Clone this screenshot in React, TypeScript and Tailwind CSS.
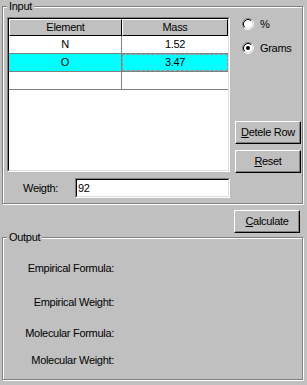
import React from "react"

const font = "font-['Liberation_Sans',Arial,sans-serif] text-[11px] tracking-[-0.3px] text-black"

function Radio({ checked, label }: { checked?: boolean; label: string }) {
  return (
    <div className="flex h-[14px] items-center ml-[7px]">
      <svg width="12" height="12" viewBox="0 0 12 12" className="shrink-0">
        <circle cx="6" cy="6" r="4.5" fill="white" />
        <path d="M2.11 9.89 A5.5 5.5 0 0 1 9.89 2.11" stroke="#808080" fill="none" />
        <path d="M9.89 2.11 A5.5 5.5 0 0 1 2.11 9.89" stroke="white" fill="none" />
        <path d="M2.82 9.18 A4.5 4.5 0 0 1 9.18 2.82" stroke="black" fill="none" />
        <path d="M9.18 2.82 A4.5 4.5 0 0 1 2.82 9.18" stroke="#dfdfdf" fill="none" />
        {checked && <circle cx="6" cy="6" r="2" fill="black" />}
      </svg>
      <span className="ml-[6px] leading-[13px]">{label}</span>
    </div>
  )
}

function Btn({ children, className = "" }: { children: React.ReactNode; className?: string }) {
  return (
    <button
      className={
        "w-[66px] h-[23px] bg-[#c0c0c0] border border-t-white border-l-white border-r-black border-b-black shadow-[inset_-1px_-1px_0_#808080] flex items-center justify-center leading-[13px] " +
        className
      }
    >
      {children}
    </button>
  )
}

function Group({ title, className = "", children }: { title: string; className?: string; children?: React.ReactNode }) {
  return (
    <div
      className={
        "relative ml-[2px] w-[301px] border border-[#808080] shadow-[inset_1px_1px_0_white,1px_1px_0_white] " + className
      }
    >
      {/* caption sits over the etched line */}
      <span className="absolute left-[4px] -top-[7px] px-[2px] bg-[#c0c0c0] leading-[13px]">{title}</span>
      {children}
    </div>
  )
}

const rows = [
  { el: "N", mass: "1.52", sel: false },
  { el: "O", mass: "3.47", sel: true },
  { el: "", mass: "", sel: false },
]

export default function App() {
  return (
    <div className={"w-[307px] h-[385px] bg-[#c0c0c0] overflow-hidden pt-[6px] " + font}>
      <Group title="Input" className="h-[198px] pt-[10px] pl-[4px]">
        <div className="flex h-[155px] items-start">
          {/* grid */}
          <div className="w-[223px] h-[155px] border border-t-[#808080] border-l-[#808080] border-r-white border-b-white">
            <div className="h-full bg-white border border-t-black border-l-black border-r-[#dfdfdf] border-b-[#dfdfdf]">
              <div className="flex h-[17px]">
                <div className="w-[113px] bg-[#c0c0c0] border border-t-white border-l-white border-r-black border-b-black flex items-center justify-center leading-[13px]">
                  Element
                </div>
                <div className="flex-1 bg-[#c0c0c0] border border-t-white border-l-white border-r-black border-b-black flex items-center justify-center leading-[13px]">
                  Mass
                </div>
              </div>
              {rows.map((r, i) => (
                <div key={i} className={"flex h-[18px] border-b border-[#808080] " + (r.sel ? "bg-[#00ffff]" : "")}>
                  <div className="w-[113px] border-r border-[#808080] flex items-center justify-center leading-[13px]">
                    {r.el}
                  </div>
                  <div className="flex-1 flex items-center justify-center leading-[13px]">
                    {r.sel ? (
                      <div className="w-full h-full border border-dashed border-[#c08080] flex items-center justify-center">
                        {r.mass}
                      </div>
                    ) : (
                      r.mass
                    )}
                  </div>
                </div>
              ))}
            </div>
          </div>

          <div className="flex flex-col ml-[5px]">
            <Radio label="%" />
            <div className="mt-[10px]">
              <Radio label="Grams" checked />
            </div>
            <Btn className="mt-[66px]">
              <span className="underline">D</span>etele Row
            </Btn>
            <Btn className="mt-[6px]">
              <span className="underline">R</span>eset
            </Btn>
          </div>
        </div>

        <div className="flex items-center mt-[6px]">
          <span className="w-[51px] text-right leading-[13px]">Weigth:</span>
          <div className="ml-[17px] w-[155px] h-[20px] border border-t-[#808080] border-l-[#808080] border-r-white border-b-white">
            <div className="h-full bg-white border border-t-black border-l-black border-r-[#dfdfdf] border-b-[#dfdfdf] flex items-center pl-[1px] leading-[13px]">
              92
            </div>
          </div>
        </div>
      </Group>

      <div className="flex justify-end pr-[7px] mt-[6px]">
        <Btn>
          <span className="underline">C</span>alculate
        </Btn>
      </div>

      <Group title="Output" className="h-[143px] mt-[4px]">
        <div className="flex flex-col w-[111px] text-right leading-[13px]">
          <span className="mt-[24px]">Empirical Formula:</span>
          <span className="mt-[21px]">Empirical Weight:</span>
          <span className="mt-[18px]">Molecular Formula:</span>
          <span className="mt-[14px]">Molecular Weight:</span>
        </div>
      </Group>
    </div>
  )
}
